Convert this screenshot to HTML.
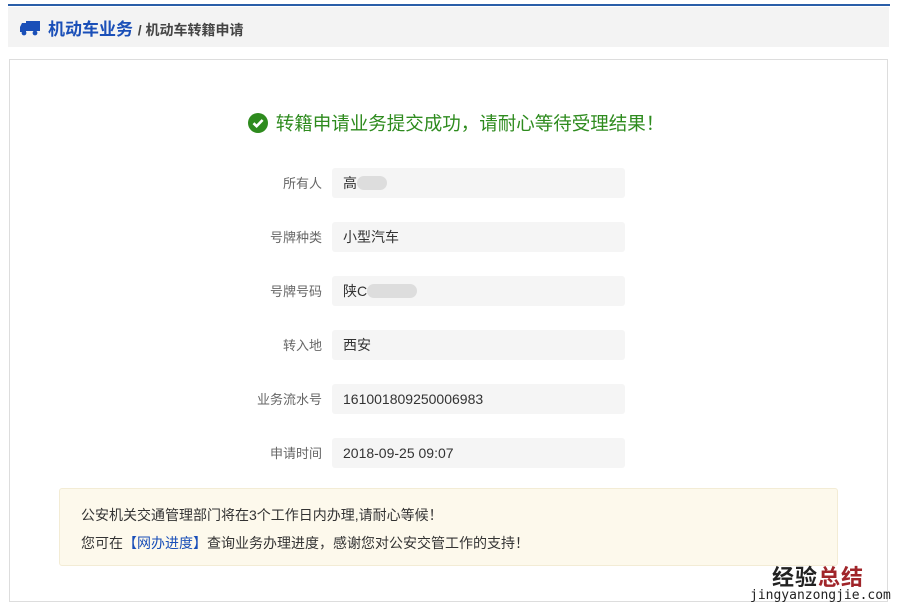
<!DOCTYPE html>
<html><head><meta charset="utf-8"><style>
body{margin:0;width:900px;height:610px;background:#fff;font-family:"Liberation Sans","Noto Sans CJK SC",sans-serif;position:relative;overflow:hidden}
.topline{position:absolute;left:8px;top:4px;width:882px;height:2px;background:#2a5ea8}
.hdr{position:absolute;left:8px;top:7px;width:881px;height:40px;background:#f3f3f3}
.hdr .t{position:absolute;left:40px;top:8px;font-size:17px;font-weight:bold;color:#1a4fb8}
.hdr .s{font-size:14px;color:#444}
.panel{position:absolute;left:9px;top:59px;width:879px;height:543px;border:1px solid #ddd;box-sizing:border-box}
.ok{position:absolute;left:6px;width:900px;top:110px;text-align:center;font-size:18.5px;color:#2e8b1e}
.ok svg{vertical-align:-3px;margin-right:8px}
.lab{position:absolute;width:150px;left:172px;text-align:right;font-size:13px;color:#666}
.val{position:absolute;left:332px;width:293px;height:30px;background:#f5f5f5;border-radius:3px;font-size:14px;color:#333;line-height:30px;padding-left:11px;box-sizing:border-box}
.blur{display:inline-block;height:14px;background:#ddd;border-radius:7px;vertical-align:-2px}
.note{position:absolute;left:59px;top:488px;width:779px;height:78px;background:#fdf9ec;border:1px solid #f3ecd5;border-radius:3px;box-sizing:border-box;font-size:14px;color:#333}
.note p{margin:0;position:absolute;left:21px}
.wm{position:absolute;left:772px;top:560px;font-size:22px;font-weight:bold;color:#222;letter-spacing:1px}
.wm2{position:absolute;left:750px;top:588px;font-size:13px;color:#222;font-family:"DejaVu Sans Mono",monospace}
</style></head><body>
<div class="topline"></div>
<div class="hdr">
<svg style="position:absolute;left:12px;top:13px" width="20" height="16" viewBox="0 0 20 16"><rect x="6" y="1" width="14" height="10" fill="#1a4fb8"/><path d="M0 7 L2 3 H6 V12 H0Z" fill="#1a4fb8"/><circle cx="4" cy="13" r="2.4" fill="#1a4fb8"/><circle cx="15" cy="13" r="2.4" fill="#1a4fb8"/></svg>
<div class="t">机动车业务 <span class="s">/ 机动车转籍申请</span></div>
</div>
<div class="panel"></div>
<div class="ok"><svg width="20" height="20" viewBox="0 0 20 20"><circle cx="10" cy="10" r="10" fill="#2e8b1e"/><path d="M5.5 10.2 L8.6 13.2 L14.6 7" stroke="#fff" stroke-width="2.6" fill="none"/></svg>转籍申请业务提交成功，请耐心等待受理结果！</div>
<div class="lab" style="top:173px">所有人</div><div class="val" style="top:168px">高<span class="blur" style="width:30px"></span></div>
<div class="lab" style="top:227px">号牌种类</div><div class="val" style="top:222px">小型汽车</div>
<div class="lab" style="top:281px">号牌号码</div><div class="val" style="top:276px">陕C<span class="blur" style="width:50px"></span></div>
<div class="lab" style="top:335px">转入地</div><div class="val" style="top:330px">西安</div>
<div class="lab" style="top:389px">业务流水号</div><div class="val" style="top:384px">161001809250006983</div>
<div class="lab" style="top:443px">申请时间</div><div class="val" style="top:438px">2018-09-25 09:07</div>
<div class="note"><p style="top:16px">公安机关交通管理部门将在3个工作日内办理,请耐心等候！</p><p style="top:44px">您可在<span style="color:#1a4fb8">【网办进度】</span>查询业务办理进度，感谢您对公安交管工作的支持！</p></div>
<div class="wm">经验<span style="color:#a0252a">总结</span></div>
<div class="wm2">jingyanzongjie.com</div>
</body></html>
